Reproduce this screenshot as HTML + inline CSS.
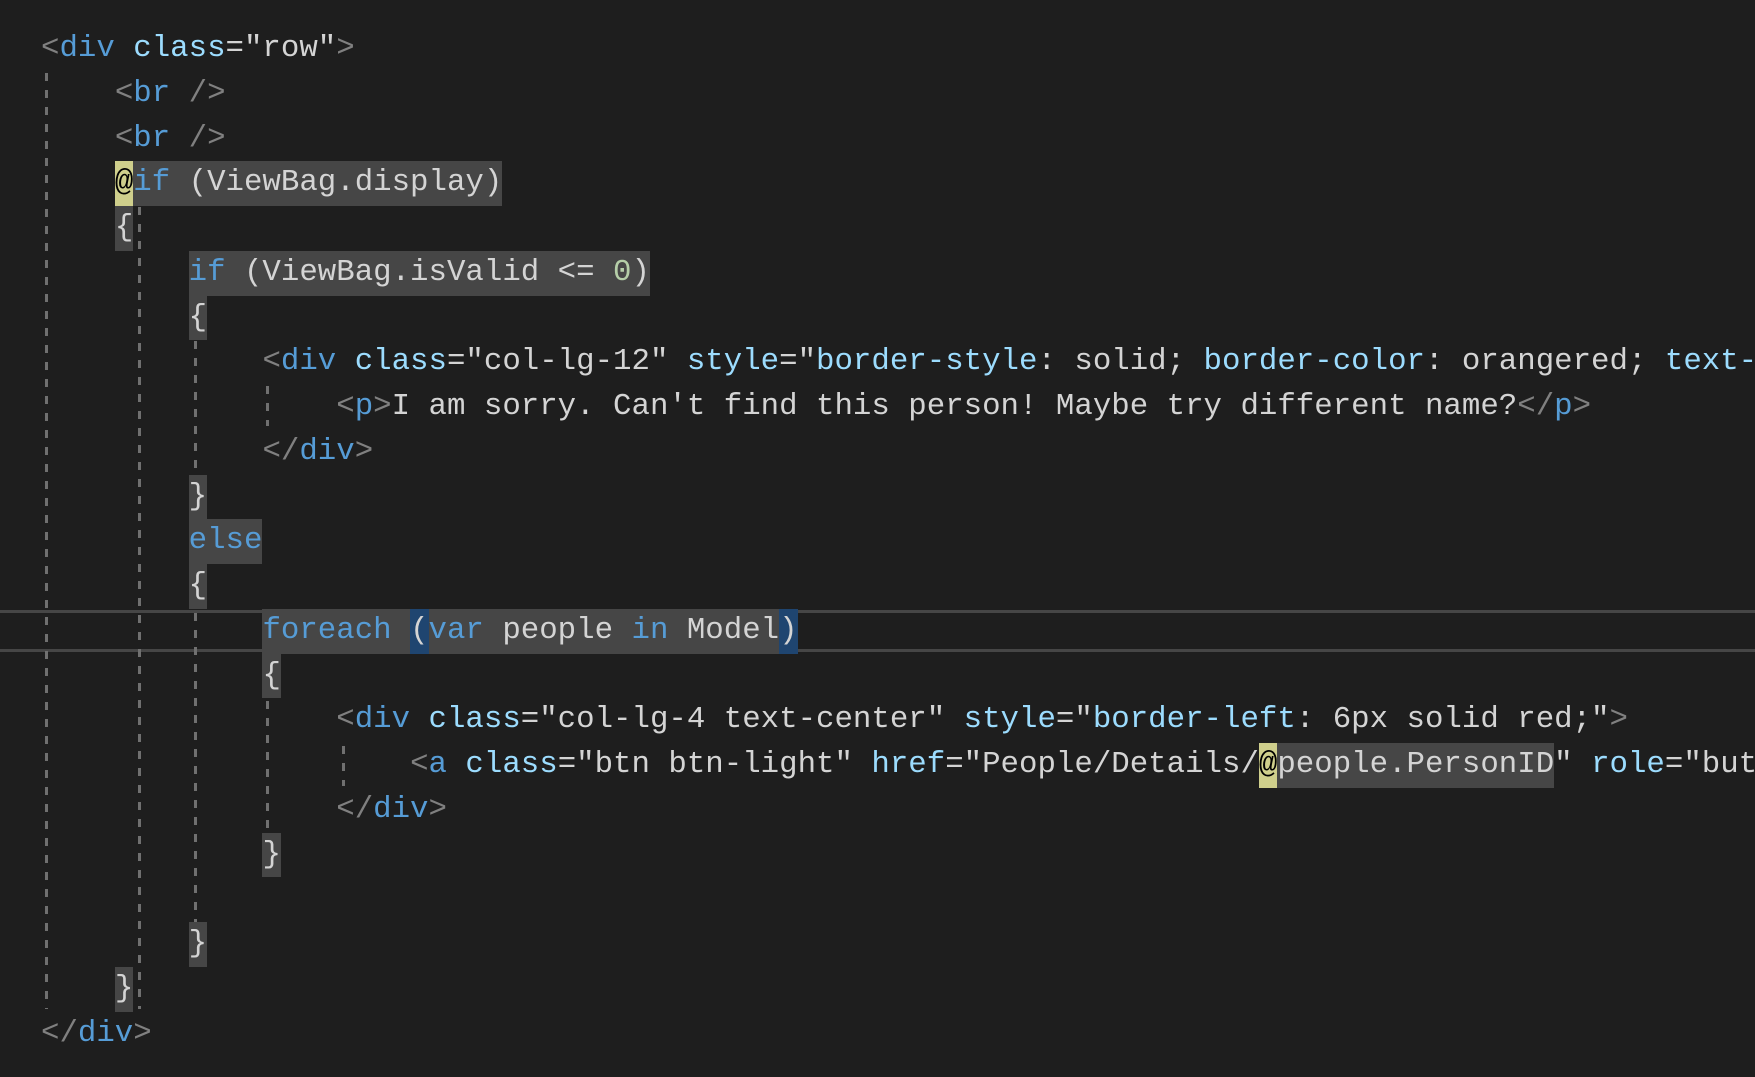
<!DOCTYPE html>
<html><head><meta charset="utf-8"><style>
html,body{margin:0;padding:0;background:#1e1e1e;width:1755px;height:1077px;overflow:hidden}
#w{position:absolute;left:0;top:3px;width:1755px;height:1074px;overflow:hidden}
.l{position:absolute;left:41px;height:44.76px;line-height:44.76px;white-space:pre;font-family:"Liberation Mono",monospace;font-size:30.75px;color:#d4d4d4}
.l span{display:inline-block;height:44.76px}
.b{color:#808080}.t{color:#569cd6}.a{color:#9cdcfe}.k{color:#569cd6}.n{color:#b5cea8}
.h{background:#464646}.y{background:#cfcf8c;color:#000}.p{background:#1f4570}
.g{position:absolute;width:3px;background:repeating-linear-gradient(to bottom,#707070 0 8px,transparent 8px 17px)}
.cur{position:absolute;left:0;width:1755px;height:3px;background:#464646}
</style></head><body><div id="w">
<div class="cur" style="top:607px"></div>
<div class="cur" style="top:646px"></div>
<div class="g" style="left:45px;top:70px;height:936px"></div>
<div class="g" style="left:138px;top:204px;height:802px"></div>
<div class="g" style="left:194px;top:338px;height:582px"></div>
<div class="g" style="left:266px;top:383px;height:40px"></div>
<div class="g" style="left:266px;top:698px;height:130px"></div>
<div class="g" style="left:342px;top:743px;height:40px"></div>

<div class="l" style="top:24px"><span class="b">&lt;</span><span class="t">div</span> <span class="a">class</span>="row"<span class="b">&gt;</span></div>
<div class="l" style="top:68.8px">    <span class="b">&lt;</span><span class="t">br</span> <span class="b">/&gt;</span></div>
<div class="l" style="top:113.5px">    <span class="b">&lt;</span><span class="t">br</span> <span class="b">/&gt;</span></div>
<div class="l" style="top:158.3px">    <span class="y">@</span><span class="h"><span class="k">if</span> (ViewBag.display)</span></div>
<div class="l" style="top:203px">    <span class="h">{</span></div>
<div class="l" style="top:247.8px">        <span class="h"><span class="k">if</span> (ViewBag.isValid &lt;= <span class="n">0</span>)</span></div>
<div class="l" style="top:292.6px">        <span class="h">{</span></div>
<div class="l" style="top:337.3px">            <span class="b">&lt;</span><span class="t">div</span> <span class="a">class</span>="col-lg-12" <span class="a">style</span>="<span class="a">border-style</span>: solid; <span class="a">border-color</span>: orangered; <span class="a">text-align</span>: center;"<span class="b">&gt;</span></div>
<div class="l" style="top:382px">                <span class="b">&lt;</span><span class="t">p</span><span class="b">&gt;</span>I am sorry. Can't find this person! Maybe try different name?<span class="b">&lt;/</span><span class="t">p</span><span class="b">&gt;</span></div>
<div class="l" style="top:426.8px">            <span class="b">&lt;/</span><span class="t">div</span><span class="b">&gt;</span></div>
<div class="l" style="top:471.6px">        <span class="h">}</span></div>
<div class="l" style="top:516.4px">        <span class="h"><span class="k">else</span></span></div>
<div class="l" style="top:561px">        <span class="h">{</span></div>
<div class="l" style="top:605.9px">            <span class="h"><span class="k">foreach</span> <span class="p">(</span><span class="k">var</span> people <span class="k">in</span> Model<span class="p">)</span></span></div>
<div class="l" style="top:650.6px">            <span class="h">{</span></div>
<div class="l" style="top:695.4px">                <span class="b">&lt;</span><span class="t">div</span> <span class="a">class</span>="col-lg-4 text-center" <span class="a">style</span>="<span class="a">border-left</span>: 6px solid red;"<span class="b">&gt;</span></div>
<div class="l" style="top:740.2px">                    <span class="b">&lt;</span><span class="t">a</span> <span class="a">class</span>="btn btn-light" <span class="a">href</span>="People/Details/<span class="y">@</span><span class="h">people.PersonID</span>" <span class="a">role</span>="button"<span class="b">&gt;</span></div>
<div class="l" style="top:784.9px">                <span class="b">&lt;/</span><span class="t">div</span><span class="b">&gt;</span></div>
<div class="l" style="top:829.7px">            <span class="h">}</span></div>
<div class="l" style="top:919.2px">        <span class="h">}</span></div>
<div class="l" style="top:964px">    <span class="h">}</span></div>
<div class="l" style="top:1008.7px"><span class="b">&lt;/</span><span class="t">div</span><span class="b">&gt;</span></div>
</div></body></html>
